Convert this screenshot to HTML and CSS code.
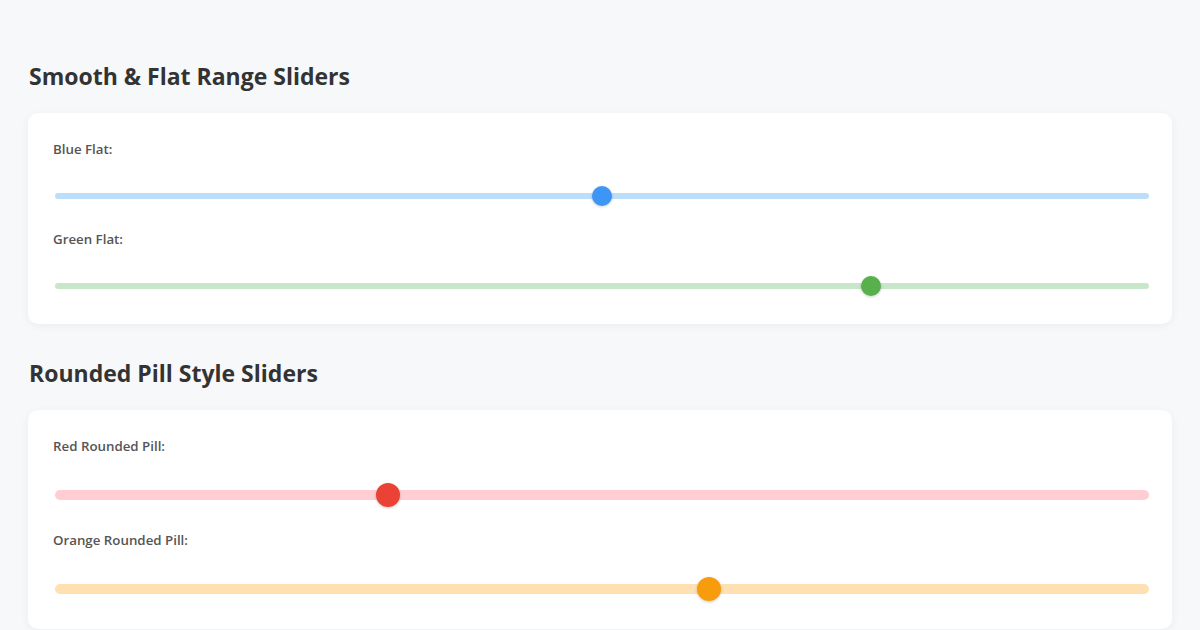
FILE: index.html
```html
<!DOCTYPE html>
<html lang="en">
<head>
    <meta charset="UTF-8">
    <meta name="viewport" content="width=device-width, initial-scale=1.0">
    <title>Range Sliders</title>
    <link rel="stylesheet" href="styles.css">
</head>
<body>
    <div class="container">
        <h2>Smooth &amp; Flat Range Sliders</h2>
        <div class="card">
            <div class="slider-group">
                <label for="blueFlat">Blue Flat:</label>
                <input type="range" id="blueFlat" class="flat blue" min="0" max="100" value="50">
            </div>
            <div class="slider-group">
                <label for="greenFlat">Green Flat:</label>
                <input type="range" id="greenFlat" class="flat green" min="0" max="100" value="75">
            </div>
        </div>

        <h2>Rounded Pill Style Sliders</h2>
        <div class="card">
            <div class="slider-group">
                <label for="redPill">Red Rounded Pill:</label>
                <input type="range" id="redPill" class="pill red" min="0" max="100" value="30">
            </div>
            <div class="slider-group">
                <label for="orangePill">Orange Rounded Pill:</label>
                <input type="range" id="orangePill" class="pill orange" min="0" max="100" value="60">
            </div>
        </div>
    </div>
</body>
</html>
```

FILE: styles.css
```css
body {
    font-family: "Open Sans", "Noto Sans", sans-serif;
    background-color: #f7f8fa;
    color: #333;
    margin: 0;
    padding: 0;
}
.container {
    padding: 27px 28px;
}
h2 {
    font-size: 23px;
    line-height: 30px;
    font-weight: 700;
    color: #333;
    margin: 34px 0 22px 1px;
}
.card {
    background: #ffffff;
    border-radius: 10px;
    box-shadow: 0 2px 10px rgba(0, 0, 0, 0.05);
    padding: 26px 25px 5px;
}
.slider-group {
    margin-bottom: 23px;
}
label {
    display: block;
    font-size: 13.3px;
    line-height: 20px;
    font-weight: 600;
    color: #555;
    margin-bottom: 27px;
}
input[type=range] {
    -webkit-appearance: none;
    appearance: none;
    display: block;
    width: 100%;
    margin: 0 2px;
    background: transparent;
    cursor: pointer;
}
input[type=range]::-webkit-slider-runnable-track {
    border-radius: 3px;
}
input[type=range]::-webkit-slider-thumb {
    -webkit-appearance: none;
    border-radius: 50%;
    border: none;
    box-shadow: 0 1px 3px rgba(0, 0, 0, 0.2);
}

/* flat */
input.flat {
    height: 20px;
}
input.flat::-webkit-slider-runnable-track {
    height: 6px;
}
input.flat::-webkit-slider-thumb {
    width: 20px;
    height: 20px;
    margin-top: -7px;
}
input.blue::-webkit-slider-runnable-track { background: #bbdefb; }
input.blue::-webkit-slider-thumb { background: #3d95f5; }
input.green::-webkit-slider-runnable-track { background: #c8e6c9; }
input.green::-webkit-slider-thumb { background: #58b04c; }

/* pill */
input.pill {
    height: 24px;
}
input.pill::-webkit-slider-runnable-track {
    height: 10px;
    border-radius: 5px;
}
input.pill::-webkit-slider-thumb {
    width: 24px;
    height: 24px;
    margin-top: -7px;
}
input.red::-webkit-slider-runnable-track { background: #ffcdd2; }
input.red::-webkit-slider-thumb { background: #ea4335; }
input.orange::-webkit-slider-runnable-track { background: #ffe0b2; }
input.orange::-webkit-slider-thumb { background: #f89c0e; }
```
